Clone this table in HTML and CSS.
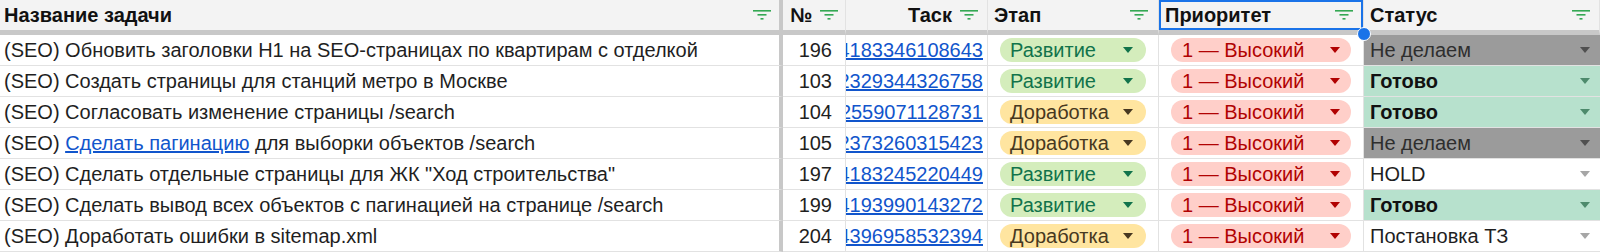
FILE: index.html
```html
<!DOCTYPE html>
<html lang="ru">
<head>
<meta charset="utf-8">
<title>Задачи</title>
<link rel="stylesheet" href="styles.css">
</head>
<body>
<svg width="0" height="0" class="defs">
  <defs>
    <symbol id="flt" viewBox="0 0 18 10">
      <rect x="0" y="0" width="18" height="1.6" fill="currentColor"/>
      <rect x="4.5" y="4" width="9" height="1.6" fill="currentColor"/>
      <rect x="7.5" y="8" width="3" height="1.6" fill="currentColor"/>
    </symbol>
    <symbol id="tri" viewBox="0 0 10 6">
      <path d="M0 0 H10 L5 6 Z" fill="currentColor"/>
    </symbol>
  </defs>
</svg>
<div class="sheet">
  <div class="hc c-name"><span class="ht">Название задачи</span><svg class="fi"><use href="#flt"/></svg></div>
  <div class="hc c-num"><span class="ht">№</span><svg class="fi"><use href="#flt"/></svg></div>
  <div class="hc c-task end"><span class="ht">Таск</span><svg class="fi"><use href="#flt"/></svg></div>
  <div class="hc c-stage"><span class="ht">Этап</span><svg class="fi"><use href="#flt"/></svg></div>
  <div class="hc c-prio sel"><span class="ht">Приоритет</span><svg class="fi"><use href="#flt"/></svg><span class="handle"></span></div>
  <div class="hc c-status"><span class="ht">Статус</span><svg class="fi"><use href="#flt"/></svg></div>

  <div class="cell c-name">(SEO) Обновить заголовки H1 на SEO-страницах по квартирам с отделкой</div>
  <div class="cell c-num">196</div>
  <div class="cell c-task"><a href="#">4183346108643</a></div>
  <div class="cell c-stage"><span class="chip dev">Развитие<svg class="tr"><use href="#tri"/></svg></span></div>
  <div class="cell c-prio"><span class="chip high">1 — Высокий<svg class="tr"><use href="#tri"/></svg></span></div>
  <div class="cell c-status st-no">Не делаем<svg class="tr"><use href="#tri"/></svg></div>

  <div class="cell c-name">(SEO) Создать страницы для станций метро в Москве</div>
  <div class="cell c-num">103</div>
  <div class="cell c-task"><a href="#">2329344326758</a></div>
  <div class="cell c-stage"><span class="chip dev">Развитие<svg class="tr"><use href="#tri"/></svg></span></div>
  <div class="cell c-prio"><span class="chip high">1 — Высокий<svg class="tr"><use href="#tri"/></svg></span></div>
  <div class="cell c-status st-done">Готово<svg class="tr"><use href="#tri"/></svg></div>

  <div class="cell c-name">(SEO) Согласовать изменение страницы /search</div>
  <div class="cell c-num">104</div>
  <div class="cell c-task"><a href="#">2559071128731</a></div>
  <div class="cell c-stage"><span class="chip rev">Доработка<svg class="tr"><use href="#tri"/></svg></span></div>
  <div class="cell c-prio"><span class="chip high">1 — Высокий<svg class="tr"><use href="#tri"/></svg></span></div>
  <div class="cell c-status st-done">Готово<svg class="tr"><use href="#tri"/></svg></div>

  <div class="cell c-name">(SEO)&nbsp;<a href="#">Сделать пагинацию</a>&nbsp;для выборки объектов /search</div>
  <div class="cell c-num">105</div>
  <div class="cell c-task"><a href="#">2373260315423</a></div>
  <div class="cell c-stage"><span class="chip rev">Доработка<svg class="tr"><use href="#tri"/></svg></span></div>
  <div class="cell c-prio"><span class="chip high">1 — Высокий<svg class="tr"><use href="#tri"/></svg></span></div>
  <div class="cell c-status st-no">Не делаем<svg class="tr"><use href="#tri"/></svg></div>

  <div class="cell c-name">(SEO) Сделать отдельные страницы для ЖК "Ход строительства"</div>
  <div class="cell c-num">197</div>
  <div class="cell c-task"><a href="#">4183245220449</a></div>
  <div class="cell c-stage"><span class="chip dev">Развитие<svg class="tr"><use href="#tri"/></svg></span></div>
  <div class="cell c-prio"><span class="chip high">1 — Высокий<svg class="tr"><use href="#tri"/></svg></span></div>
  <div class="cell c-status st-plain">HOLD<svg class="tr"><use href="#tri"/></svg></div>

  <div class="cell c-name">(SEO) Сделать вывод всех объектов с пагинацией на странице /search</div>
  <div class="cell c-num">199</div>
  <div class="cell c-task"><a href="#">4193990143272</a></div>
  <div class="cell c-stage"><span class="chip dev">Развитие<svg class="tr"><use href="#tri"/></svg></span></div>
  <div class="cell c-prio"><span class="chip high">1 — Высокий<svg class="tr"><use href="#tri"/></svg></span></div>
  <div class="cell c-status st-done">Готово<svg class="tr"><use href="#tri"/></svg></div>

  <div class="cell c-name">(SEO) Доработать ошибки в sitemap.xml</div>
  <div class="cell c-num">204</div>
  <div class="cell c-task"><a href="#">4396958532394</a></div>
  <div class="cell c-stage"><span class="chip rev">Доработка<svg class="tr"><use href="#tri"/></svg></span></div>
  <div class="cell c-prio"><span class="chip high">1 — Высокий<svg class="tr"><use href="#tri"/></svg></span></div>
  <div class="cell c-status st-plain">Постановка ТЗ<svg class="tr"><use href="#tri"/></svg></div>
</div>
</body>
</html>
```

FILE: styles.css
```css
html, body {
  margin: 0;
  padding: 0;
  background: #ffffff;
}
.defs {
  position: absolute;
  width: 0;
  height: 0;
  overflow: hidden;
}
.sheet {
  display: grid;
  grid-template-columns: 783px 63px 142px 171px 205px 236px;
  grid-template-rows: 35px repeat(7, 31px);
  font-family: "Liberation Sans", Arial, sans-serif;
  font-size: 20px;
  color: #1f1f1f;
  width: 1600px;
}
.hc, .cell {
  box-sizing: border-box;
  border-right: 1px solid #e2e2e2;
  display: flex;
  align-items: center;
  white-space: nowrap;
  overflow: hidden;
  min-width: 0;
}
.hc {
  background: #f3f3f3;
  border-bottom: 5px solid #c8c8c8;
  font-weight: bold;
  color: #111;
  padding: 0 10px 0 6px;
  justify-content: space-between;
  gap: 8px;
}
.cell {
  border-bottom: 1px solid #e2e2e2;
  padding: 0 6px;
}
.c-name {
  border-right: 4px solid #c8c8c8;
}
.cell.c-name {
  padding-left: 4px;
}
.hc.c-name {
  padding-left: 4px;
  padding-right: 8px;
}
.hc.c-num {
  justify-content: flex-start;
  padding-left: 7px;
}
.hc.end {
  justify-content: flex-end;
  padding-right: 9px;
}
.hc.c-status {
  padding-left: 6px;
  padding-right: 9px;
}
.fi {
  width: 18px;
  height: 10px;
  flex: none;
  color: #34a853;
}
.sel {
  position: relative;
  overflow: visible;
  box-shadow: inset 0 0 0 2px #1a73e8;
  z-index: 2;
}
.handle {
  position: absolute;
  right: -8px;
  bottom: -11px;
  width: 12px;
  height: 12px;
  border-radius: 50%;
  background: #1a73e8;
  border: 1.5px solid #ffffff;
}
.cell.c-num {
  justify-content: flex-end;
  padding-right: 13px;
}
.cell.c-task {
  justify-content: flex-end;
  padding: 0 4px 0 0;
}
.cell.c-task a {
  flex: none;
}
a {
  color: #1155cc;
  text-decoration: underline;
}
.cell.c-stage, .cell.c-prio {
  padding: 0 12px;
}
.chip {
  flex: 1;
  height: 24px;
  border-radius: 12px;
  display: flex;
  align-items: center;
  justify-content: space-between;
  padding: 0 13px 0 10px;
  box-sizing: border-box;
}
.tr {
  width: 10px;
  height: 6px;
  flex: none;
}
.dev {
  background: #d4edbc;
  color: #11734b;
}
.rev {
  background: #ffe5a0;
  color: #473821;
}
.high {
  background: #ffcfc9;
  color: #b10202;
}
.cell.c-prio .chip {
  padding-left: 11px;
  padding-right: 11px;
}
.cell.c-status {
  border-right: none;
  justify-content: space-between;
  padding: 0 10px 0 6px;
}
.st-no {
  background: #9b9b9b;
  color: #2e2e2e;
}
.st-no .tr {
  color: #505050;
}
.st-done {
  background: #b7e1cd;
  font-weight: bold;
  color: #111;
}
.st-done .tr {
  color: #4d8a6c;
}
.st-plain .tr {
  color: #a6a6a6;
}
```
